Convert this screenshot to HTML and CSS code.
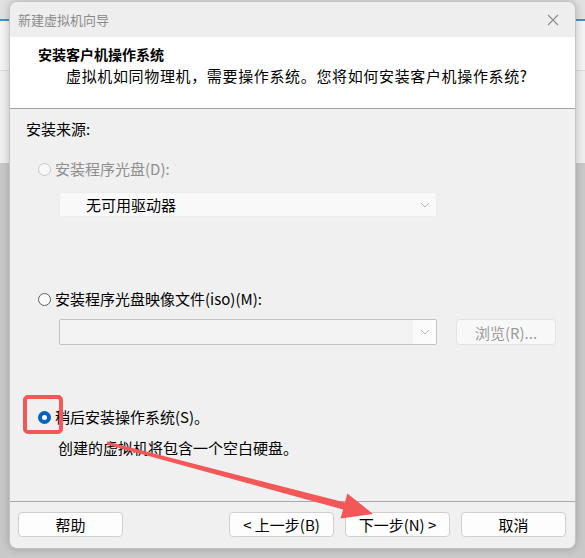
FILE: index.html
```html
<!DOCTYPE html>
<html lang="zh-CN">
<head>
<meta charset="utf-8">
<title>新建虚拟机向导</title>
<link rel="stylesheet" href="styles.css">
</head>
<body>
<div class="desk">
  <div class="dialog">
    <div class="titlebar">
      <span class="title">新建虚拟机向导</span>
      <svg class="close" width="12" height="12" viewBox="0 0 12 12"><path d="M1 1L11 11M11 1L1 11" stroke="#8c8c8c" stroke-width="1.1" fill="none"/></svg>
    </div>
    <div class="header">
      <div class="h-title">安装客户机操作系统</div>
      <div class="h-sub">虚拟机如同物理机，需要操作系统。您将如何安装客户机操作系统?</div>
    </div>
    <div class="content">
      <div class="label">安装来源:</div>
      <div class="radio-row disabled r1"><span class="radio dis"></span><span>安装程序光盘(D):</span></div>
      <div class="select"><span>无可用驱动器</span><svg class="chev" width="10" height="6" viewBox="0 0 10 6"><path d="M1 1L5 5L9 1" stroke="#b4b4b4" fill="none"/></svg></div>
      <div class="radio-row r2"><span class="radio"></span><span>安装程序光盘映像文件(iso)(M):</span></div>
      <div class="iso-row">
        <div class="combo"><div class="combo-field"></div><div class="combo-btn"><svg width="10" height="6" viewBox="0 0 10 6"><path d="M1 1L5 5L9 1" stroke="#b4b4b4" fill="none"/></svg></div></div>
        <div class="browse">浏览(R)...</div>
      </div>
      <div class="radio-row r3"><span class="radio sel"></span><span>稍后安装操作系统(S)。</span></div>
      <div class="desc">创建的虚拟机将包含一个空白硬盘。</div>
    </div>
    <div class="footer">
      <div class="btn">帮助</div>
      <div class="spacer"></div>
      <div class="btn">&lt; 上一步(B)</div>
      <div class="btn">下一步(N) &gt;</div>
      <div class="btn">取消</div>
    </div>
  </div>
  <svg class="annot" width="585" height="558" viewBox="0 0 585 558">
    <rect x="25" y="397" width="36" height="35" rx="3" fill="none" stroke="#f45757" stroke-width="4"/>
    <polygon points="107.3,441.5 344.9,502.6 347.4,493.4 373,514 340.6,518.6 343.1,509.4 106.7,444.5" fill="#f45757"/>
  </svg>
</div>
</body>
</html>
```
FILE: styles.css
```css
html, body {
  margin: 0;
  padding: 0;
}
body {
  width: 585px;
  height: 558px;
  overflow: hidden;
  font-family: "Noto Sans CJK SC", "Noto Sans", sans-serif;
  font-size: 15px;
  color: #000;
  background:
    linear-gradient(to bottom, #e2e2e2 0, #e2e2e2 19px, #4a8fc4 19px, #4a8fc4 21px, #f4f4f4 21px, #f4f4f4 70px, #dadada 70px, #dadada 71px, #efefef 71px, #efefef 163px, #c9c9c9 163px, #c9c9c9 558px);
}
.desk {
  position: relative;
  width: 585px;
  height: 558px;
  padding: 1px 9px 0 9px;
  box-sizing: border-box;
}
.dialog {
  width: 567px;
  height: 548px;
  background: #f0f0f0;
  border-radius: 8px;
  border: 1px solid #c4c4c4;
  box-sizing: border-box;
  box-shadow: 0 0 8px rgba(0,0,0,0.22);
  display: flex;
  flex-direction: column;
  overflow: hidden;
}
.titlebar {
  height: 35px;
  flex: none;
  display: flex;
  align-items: center;
  justify-content: space-between;
  padding: 0 16px 0 8px;
  background: #eeeeee;
}
.title {
  color: #8a8a8a;
  font-size: 13px;
  line-height: 20px;
}
.close { display: block; }
.header {
  height: 72px;
  flex: none;
  background: #ffffff;
  border-bottom: 1px solid #a3a3a3;
  padding: 7px 0 0 28px;
  box-sizing: border-box;
}
.h-title {
  font-weight: bold;
  font-size: 14px;
  line-height: 20px;
}
.h-sub {
  margin-top: 2px;
  padding-left: 28px;
  line-height: 20px;
  letter-spacing: 0.65px;
}
.content {
  flex: 1;
  padding: 10px 0 0 16px;
}
.label { line-height: 20px; }
.radio-row {
  display: flex;
  align-items: center;
  gap: 4px;
  padding-left: 12px;
  line-height: 20px;
}
.radio-row.disabled { color: #8e8e8e; }
.r1 { margin-top: 20px; }
.r2 { margin-top: 72px; }
.r3 { margin-top: 62px; }
.radio {
  width: 13px;
  height: 13px;
  border-radius: 50%;
  box-sizing: border-box;
  border: 1px solid #5a5a5a;
  background: #fbfbfb;
  flex: none;
}
.radio.dis {
  border-color: #c7c7c7;
  background: #f7f7f7;
}
.radio.sel {
  border: 4px solid #0563bd;
  background: #ffffff;
}
.select {
  margin: 13px 0 0 33px;
  width: 378px;
  height: 25px;
  background: #f9f9f9;
  border: 1px solid #ececec;
  border-radius: 3px;
  box-sizing: border-box;
  display: flex;
  align-items: center;
  justify-content: space-between;
  padding: 0 6px 0 26px;
}
.chev { display: block; }
.iso-row {
  display: flex;
  align-items: center;
  margin: 10px 0 0 33px;
  gap: 19px;
}
.combo {
  width: 378px;
  height: 26px;
  border: 1px solid #c3c3c3;
  border-radius: 2px;
  box-sizing: border-box;
  display: flex;
  background: #f3f3f3;
}
.combo-field { flex: 1; }
.combo-btn {
  width: 23px;
  background: #fbfbfb;
  display: flex;
  align-items: center;
  justify-content: center;
}
.combo-btn svg { display: block; }
.browse {
  width: 100px;
  height: 26px;
  box-sizing: border-box;
  border: 1px solid #e3e3e3;
  border-radius: 4px;
  background: #f8f8f8;
  color: #9b9b9b;
  display: flex;
  align-items: center;
  justify-content: center;
}
.desc {
  margin: 11px 0 0 32px;
  line-height: 20px;
}
.footer {
  flex: none;
  height: 47px;
  border-top: 1px solid #a8a8a8;
  box-sizing: border-box;
  display: flex;
  align-items: flex-start;
  padding: 10px 9px 0 8px;
  gap: 11px;
}
.spacer { flex: 1; }
.btn {
  width: 105px;
  height: 25px;
  box-sizing: border-box;
  border: 1px solid #d0d0d0;
  border-radius: 4px;
  background: #fdfdfd;
  display: flex;
  align-items: center;
  justify-content: center;
}
.annot {
  position: absolute;
  left: 0;
  top: 0;
  pointer-events: none;
}
```
